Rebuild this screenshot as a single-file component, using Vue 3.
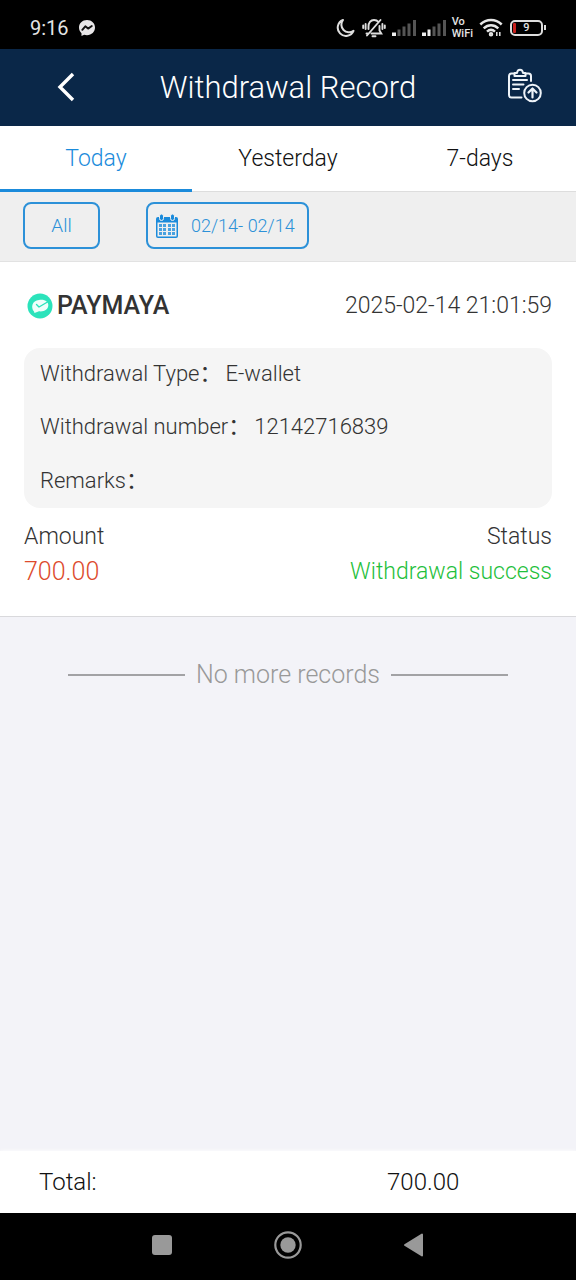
<script setup>
import { ref } from 'vue'

const tabs = ['Today', 'Yesterday', '7-days']
const activeTab = ref('Today')

const record = {
  wallet: 'PAYMAYA',
  time: '2025-02-14 21:01:59',
  details: [
    { label: 'Withdrawal Type', value: 'E-wallet' },
    { label: 'Withdrawal number', value: '12142716839' },
    { label: 'Remarks', value: '' },
  ],
  amount: '700.00',
  status: 'Withdrawal success',
}

const gridRows = [10, 14, 18]
const gridCols = [3, 7, 12, 16]
</script>

<template>
  <div class="screen">
    <div class="statusbar">
      <span class="clock">9:16</span>
      <svg class="messenger" width="18" height="18" viewBox="0 0 18 18">
        <path d="M9 1C4.400 1 1 4.200 1 8.600c0 2.300 1 4.200 2.500 5.600V17l2.600-1.200c.9.300 1.900.4 2.900.4 4.600 0 8-3.200 8-7.600S13.600 1 9 1z" fill="#e8e6e8" />
        <path d="M4.300 10.800l3-3.500 2.800 2.300 3.700-2.600" fill="none" stroke="#111" stroke-width="1.900" stroke-linejoin="round" stroke-linecap="round" />
      </svg>
      <div class="indicators">
        <svg width="20" height="20" viewBox="0 0 20 20">
          <path d="M7 2A8.200 8.200 0 1 0 17.500 12.800 7.600 7.600 0 0 1 7 2z" fill="none" stroke="#dedede" stroke-width="2" stroke-linejoin="round" />
        </svg>
        <svg width="24" height="20" viewBox="0 0 24 20" fill="none" stroke="#dedede" stroke-width="1.900" stroke-linecap="round">
          <path d="M6.500 11V8.500C6.500 5 8.500 2 12 2c2 0 3.500.8 4.500 2M17.500 8v4.500l1.800 3H9.500M4.500 15.500h1M10.500 18.300h3M5 17.500L18.500 2M3.600 6v5M1.200 7.500v2.500M20.400 6v5M22.800 7.500v2.500" />
        </svg>
        <svg width="24" height="18" viewBox="0 0 24 18">
          <path d="M0 17v-3.500h4V17z" fill="#eee" />
          <path d="M5.500 17v-6.500h3V17zM10.500 17V7.500h3V17zM15.500 17V4.500h3V17zM21 17V1h3v16z" fill="#555" />
        </svg>
        <svg width="24" height="18" viewBox="0 0 24 18">
          <path d="M0 17v-3.500h4V17zM5.500 17v-6.500h3V17z" fill="#eee" />
          <path d="M10.500 17V7.500h3V17zM15.500 17V4.500h3V17zM21 17V1h3v16z" fill="#555" />
        </svg>
        <span class="vowifi"><span>Vo</span><span>WiFi</span></span>
        <svg width="24" height="19" viewBox="0 0 24 19" fill="none" stroke="#e6e6e6" stroke-width="2.500">
          <path d="M1.300 6.500c6.200-6 15.200-6 21.400 0M4.700 10.300c4.400-4.100 10.200-4.100 14.600 0M8 13.700c2.400-2.200 5.600-2.200 8 0" />
          <circle cx="12" cy="16.200" r="1" />
          <path d="M17.800 18v-4M20.800 14v4" stroke-width="1.500" />
        </svg>
        <span class="battery">
          <span class="cell"><span class="charge"></span>9</span>
          <span class="nub"></span>
        </span>
      </div>
    </div>

    <header class="header">
      <button class="back" aria-label="Back">
        <svg width="18" height="30" viewBox="0 0 18 30">
          <path d="M16 2L3 15l13 13" fill="none" stroke="#fff" stroke-width="3.400" />
        </svg>
      </button>
      <h1>Withdrawal Record</h1>
      <button class="submit" aria-label="Withdraw">
        <svg width="36" height="36" viewBox="0 0 36 36" fill="none" stroke="#eef3f8" stroke-width="2" stroke-linecap="round" stroke-linejoin="round">
          <path d="M7 5.500H4.500Q2 5.500 2 8v19q0 2.500 2.500 2.500H14.500M19 5.500h2.500Q24 5.500 24 8v5M7.500 8V5h2.500c.5-4.500 5.500-4.500 6 0h2.500v3zM6 12h14M6 16.500h10.500M6 21h6" />
          <circle cx="25.500" cy="25" r="8.300" />
          <path d="M25.500 29.500v-8.500M21.500 24.500l4-4 4 4" stroke-width="2.200" />
        </svg>
      </button>
    </header>

    <nav class="tabs">
      <button
        v-for="tab in tabs"
        :key="tab"
        class="tab"
        :class="{ active: tab === activeTab }"
        @click="activeTab = tab"
      >{{ tab }}</button>
    </nav>

    <div class="filters">
      <button class="filter all">All</button>
      <button class="filter dates">
        <svg width="22" height="24" viewBox="0 0 22 24">
          <path d="M2 3h18q2 0 2 2v17q0 2-2 2H2q-2 0-2-2V5q0-2 2-2z" fill="#1b8bdb" />
          <path d="M1.500 8.500h19V22q0 .5-.5.500H2q-.5 0-.5-.5z" fill="#efefef" />
          <rect x="3.500" y="0" width="4" height="6.500" rx="2" fill="#1b8bdb" stroke="#efefef" stroke-width="1" />
          <rect x="14.500" y="0" width="4" height="6.500" rx="2" fill="#1b8bdb" stroke="#efefef" stroke-width="1" />
          <template v-for="y in gridRows" :key="y">
            <rect v-for="x in gridCols" :key="x" :x="x" :y="y" width="3" height="3" fill="#4aa2e0" />
          </template>
        </svg>
        <span>02/14- 02/14</span>
      </button>
    </div>

    <main class="content">
      <article class="record">
        <div class="row top">
          <span class="wallet">
            <svg width="26" height="26" viewBox="0 0 26 26">
              <circle cx="13" cy="13" r="12.500" fill="#2be3bb" />
              <path d="M7 18.500C3.500 14.500 5 7.500 12 7c6-1 9.500 2 9.300 5.500-.2 4-4.300 6.500-9.300 5.800L7.500 20z" fill="#effffa" />
              <path d="M9.500 11.500l2.500 2.500L20.500 9" fill="none" stroke="#2be3bb" stroke-width="1.400" stroke-linecap="round" stroke-linejoin="round" />
            </svg>
            <strong>{{ record.wallet }}</strong>
          </span>
          <time>{{ record.time }}</time>
        </div>
        <dl class="details">
          <div v-for="item in record.details" :key="item.label" class="detail">
            <dt>{{ item.label }}<span class="colon">：</span></dt>
            <dd>{{ item.value }}</dd>
          </div>
        </dl>
        <div class="row label">
          <span>Amount</span>
          <span>Status</span>
        </div>
        <div class="row result">
          <span class="amount">{{ record.amount }}</span>
          <span class="success">{{ record.status }}</span>
        </div>
      </article>
      <p class="end">No more records</p>
    </main>

    <footer class="total">
      <span>Total:</span>
      <span class="sum">700.00</span>
    </footer>

    <div class="navbar">
      <button aria-label="Recent apps">
        <svg width="28" height="28" viewBox="0 0 28 28"><rect x="4" y="4" width="20" height="20" rx="3" fill="#999" /></svg>
      </button>
      <button aria-label="Home">
        <svg width="28" height="28" viewBox="0 0 28 28">
          <circle cx="14" cy="14" r="12.700" fill="none" stroke="#999" stroke-width="2.200" />
          <circle cx="14" cy="14" r="7.700" fill="#999" />
        </svg>
      </button>
      <button aria-label="Go back">
        <svg width="28" height="28" viewBox="0 0 28 28"><path d="M5 14L22 3.500v21z" fill="#999" stroke="#999" stroke-width="2" stroke-linejoin="round" /></svg>
      </button>
    </div>
  </div>
</template>

<style>
body {
  margin: 0;
}
</style>

<style scoped>
.screen {
  display: flex;
  flex-direction: column;
  min-height: 100vh;
  background: #f3f3f8;
  color: #333;
  font-family: Roboto, "Noto Sans CJK SC", sans-serif;
  font-size: 23px;
  font-weight: 300;
  line-height: 30px;
}

button {
  padding: 0;
  border: 0;
  background: none;
  color: inherit;
  font: inherit;
  cursor: pointer;
}

svg {
  display: block;
  flex: none;
}

.statusbar {
  display: flex;
  align-items: center;
  box-sizing: border-box;
  height: 49px;
  padding: 6px 30px 0;
  background: #000;
  color: #e4e4e4;
}

.clock {
  font-size: 20px;
  font-weight: 400;
}

.messenger {
  margin-left: 9px;
}

.indicators {
  display: flex;
  align-items: center;
  gap: 6px;
  margin-left: auto;
}

.vowifi {
  display: flex;
  flex-direction: column;
  font-size: 11px;
  font-weight: 500;
  line-height: 12px;
}

.battery {
  display: flex;
  align-items: center;
  gap: 1px;
  margin-left: 1px;
}

.cell {
  position: relative;
  box-sizing: border-box;
  width: 33px;
  height: 16px;
  border: 2px solid #dedede;
  border-radius: 5px;
  font-size: 11px;
  font-weight: 500;
  line-height: 12px;
  text-align: center;
}

.charge {
  position: absolute;
  top: 1px;
  left: 1px;
  width: 3px;
  height: 10px;
  border-radius: 1px;
  background: #c8201c;
}

.nub {
  width: 2px;
  height: 5px;
  background: #dedede;
}

.header {
  display: grid;
  grid-template-columns: 104px 1fr 104px;
  align-items: center;
  height: 77px;
  background: #0a2748;
  color: #fff;
}

.header h1 {
  margin: 0;
  font-size: 31px;
  font-weight: 300;
  line-height: 40px;
  text-align: center;
}

.back {
  justify-self: end;
  margin-right: 29px;
  padding-bottom: 2px;
}

.submit {
  justify-self: end;
  margin-right: 33px;
  padding-bottom: 4px;
}

.tabs {
  display: grid;
  grid-template-columns: repeat(3, 1fr);
  background: #fff;
  color: #111;
}

.tab {
  height: 66px;
  border-bottom: 1px solid #ddd;
}

.tab.active {
  padding-top: 2px;
  border-bottom: 3px solid #1b8bdb;
  color: #1b8bdb;
}

.filters {
  display: flex;
  align-items: center;
  gap: 46px;
  box-sizing: border-box;
  height: 70px;
  padding: 0 23px 2px;
  border-bottom: 1px solid #e2e2e2;
  background: #efefef;
}

.filter {
  display: flex;
  align-items: center;
  justify-content: center;
  gap: 13px;
  box-sizing: border-box;
  height: 47px;
  border: 2px solid #2c91d8;
  border-radius: 8px;
  color: #2c91d8;
  font-size: 19px;
}

.all {
  width: 77px;
}

.dates {
  padding: 0 12px 0 8px;
  font-size: 18px;
}

.content {
  flex: 1;
}

.record {
  padding: 25px 24px 24px;
  border-bottom: 1px solid #d9d9dc;
  background: #fff;
}

.row {
  display: flex;
  align-items: center;
  justify-content: space-between;
}

.top {
  height: 38px;
}

.wallet {
  display: flex;
  align-items: center;
  gap: 4px;
  padding-left: 3px;
}

.wallet strong {
  font-size: 25px;
  font-weight: 500;
}

.details {
  margin: 23px 0 14px;
  padding: 0 16px;
  border-radius: 16px;
  background: #f5f5f5;
  font-size: 22px;
}

.detail {
  display: flex;
  align-items: center;
  gap: 4px;
  height: 54px;
}

.detail:first-child {
  height: 52px;
}

.colon {
  font-weight: 400;
}

.detail dd {
  margin: 0;
}

.result {
  height: 40px;
}

.amount {
  color: #dd4b2d;
  font-size: 25px;
}

.success {
  color: #1fc03c;
}

.end {
  display: flex;
  align-items: center;
  gap: 11px;
  margin: 0;
  padding: 43px 68px;
  color: #999;
  font-size: 25px;
}

.end::before,
.end::after {
  flex: 1;
  height: 2px;
  background: #a2a2a5;
  content: "";
}

.total {
  display: grid;
  grid-template-columns: 1fr 174px;
  align-items: center;
  box-sizing: border-box;
  height: 62px;
  padding: 0 15px 0 39px;
  background: #fff;
  box-shadow: 0 0 4px #fff;
  color: #111;
  font-size: 24px;
}

.navbar {
  display: flex;
  align-items: center;
  justify-content: center;
  gap: 98px;
  box-sizing: border-box;
  height: 67px;
  padding-bottom: 3px;
  background: #000;
}
</style>
